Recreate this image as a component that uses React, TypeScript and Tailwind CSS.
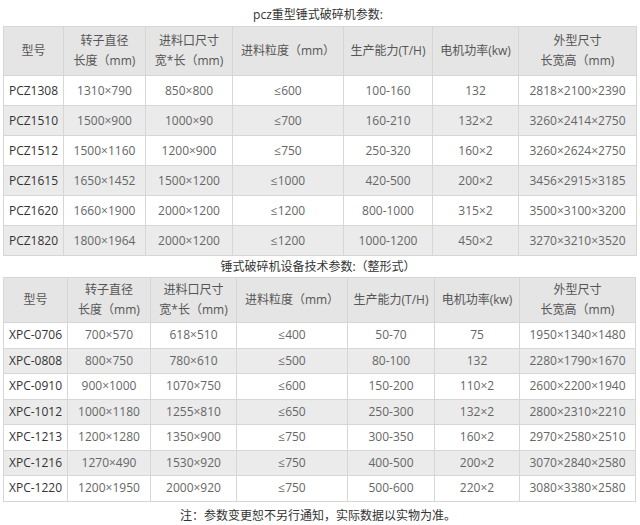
import React from "react";

type Spec = {
  title: string;
  cols: number[];
  headH: string;
  rowH: string;
  rows: string[][];
};

const head: React.ReactNode[] = [
  "型号",
  <>转子直径<br />长度（mm)</>,
  <>进料口尺寸<br />宽*长（mm)</>,
  "进料粒度（mm）",
  "生产能力(T/H)",
  "电机功率(kw)",
  <>外型尺寸<br />长宽高（mm)</>,
];

const tables: Spec[] = [
  {
    title: "pcz重型锤式破碎机参数:",
    cols: [60, 82, 87, 111, 89, 86, 118],
    headH: "h-[49px]",
    rowH: "h-[30px]",
    rows: [
      ["PCZ1308", "1310×790", "850×800", "≤600", "100-160", "132", "2818×2100×2390"],
      ["PCZ1510", "1500×900", "1000×90", "≤700", "160-210", "132×2", "3260×2414×2750"],
      ["PCZ1512", "1500×1160", "1200×900", "≤750", "250-320", "160×2", "3260×2624×2750"],
      ["PCZ1615", "1650×1452", "1500×1200", "≤1000", "420-500", "200×2", "3456×2915×3185"],
      ["PCZ1620", "1660×1900", "2000×1200", "≤1200", "800-1000", "315×2", "3500×3100×3200"],
      ["PCZ1820", "1800×1964", "2000×1200", "≤1200", "1000-1200", "450×2", "3270×3210×3520"],
    ],
  },
  {
    title: "锤式破碎机设备技术参数:（整形式）",
    cols: [64, 83, 86, 111, 87, 85, 116],
    headH: "h-[45px]",
    rowH: "h-[25.5px]",
    rows: [
      ["XPC-0706", "700×570", "618×510", "≤400", "50-70", "75", "1950×1340×1480"],
      ["XPC-0808", "800×750", "780×610", "≤500", "80-100", "132", "2280×1790×1670"],
      ["XPC-0910", "900×1000", "1070×750", "≤600", "150-200", "110×2", "2600×2200×1940"],
      ["XPC-1012", "1000×1180", "1255×810", "≤650", "250-300", "132×2", "2800×2310×2210"],
      ["XPC-1213", "1200×1280", "1350×900", "≤750", "300-350", "160×2", "2970×2580×2510"],
      ["XPC-1216", "1270×490", "1530×920", "≤750", "400-500", "200×2", "3070×2840×2580"],
      ["XPC-1220", "1200×1950", "2000×920", "≤750", "500-600", "220×2", "3080×3380×2580"],
    ],
  },
];

function ParamTable({ spec }: { spec: Spec }) {
  return (
    <table className="table-fixed border-collapse" style={{ width: spec.cols.reduce((a, b) => a + b, 0) }}>
      <colgroup>
        {spec.cols.map((w, i) => <col key={i} style={{ width: w }} />)}
      </colgroup>
      <thead>
        <tr className={`${spec.headH} bg-[#e5e5e5]`}>
          {head.map((h, i) => (
            <th key={i} className="border border-[#d6d6d6] font-normal text-[12px] leading-[20px] text-[#555] text-center p-0">
              {h}
            </th>
          ))}
        </tr>
      </thead>
      <tbody>
        {spec.rows.map((r, ri) => (
          <tr key={ri} className={`${spec.rowH} ${ri % 2 ? "bg-[#ebebeb]" : "bg-white"}`}>
            {r.map((c, ci) => (
              <td key={ci} className={`border border-[#d6d6d6] text-center p-0 text-[12px] leading-[16px] whitespace-nowrap ${ci === 0 ? "text-[#333]" : "text-[#666]"}`}>
                {c}
              </td>
            ))}
          </tr>
        ))}
      </tbody>
    </table>
  );
}

export default function App() {
  return (
    <div className="w-[640px] h-[525px] bg-white px-[3px] font-['Open_Sans','Noto_Sans_CJK_SC',sans-serif] overflow-hidden">
      <div className="h-[26px] flex items-center justify-center text-[12px] text-[#333] pt-[4px] pr-[4px]">{tables[0].title}</div>
      <ParamTable spec={tables[0]} />
      <div className="h-[21px] flex items-center justify-center text-[12px] text-[#333] pr-[4px]">{tables[1].title}</div>
      <ParamTable spec={tables[1]} />
      <div className="h-[22px] flex items-center justify-center text-[12px] leading-[16px] text-[#333] pt-[6px] pr-[4px]">注：参数变更恕不另行通知，实际数据以实物为准。</div>
    </div>
  );
}
